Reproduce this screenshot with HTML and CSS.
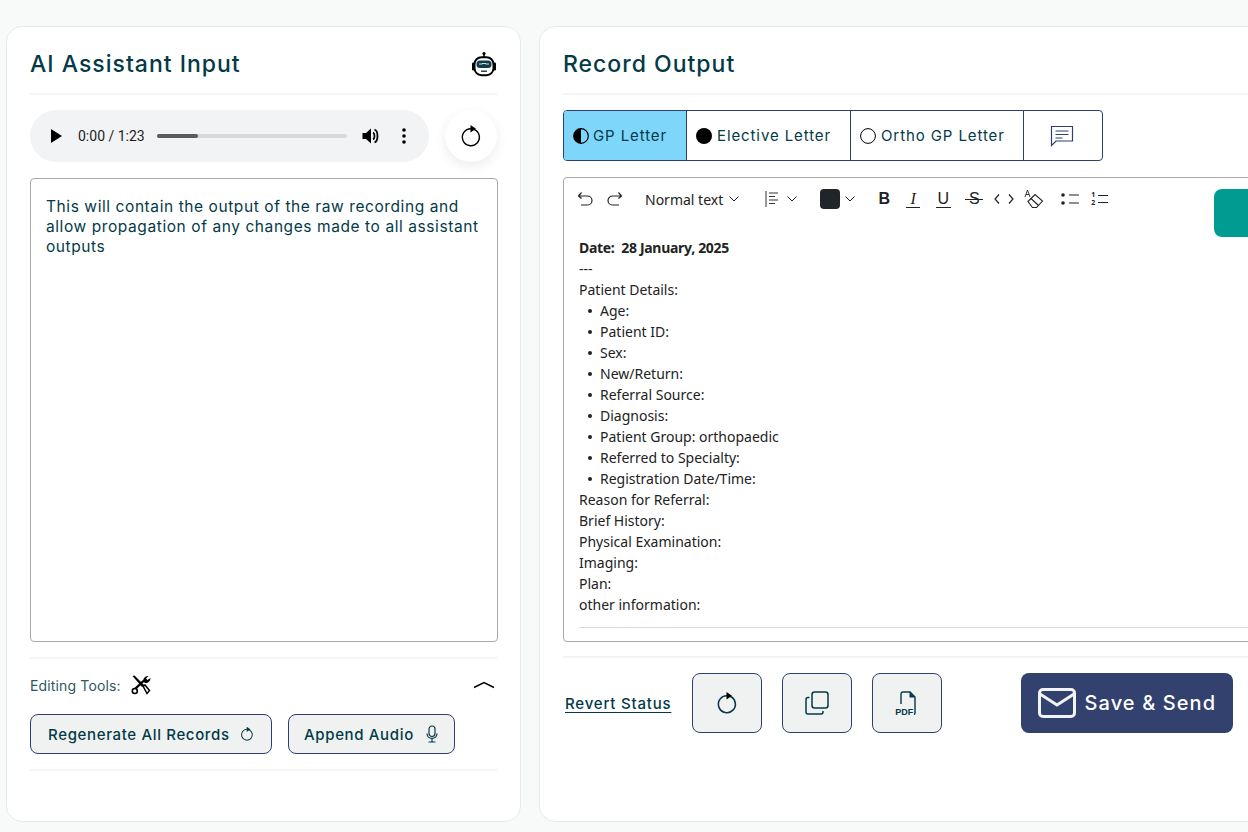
FILE: index.html
```html
<!DOCTYPE html>
<html lang="en">
<head>
    <meta charset="UTF-8">
    <meta name="viewport" content="width=device-width, initial-scale=1.0">
    <title>AI Assistant Record</title>
    <link rel="stylesheet" href="styles.css">
</head>
<body>
    <div class="page">
        <section class="card card-input">
            <div class="card-header">
                <h2>AI Assistant Input</h2>
                <svg class="robot-icon" width="26" height="26" viewBox="0 0 26 26">
                    <circle cx="13" cy="2.500" r="1.600" fill="#000"/>
                    <rect x="12.200" y="3" width="1.600" height="3.500" fill="#000"/>
                    <rect x="3.500" y="6.200" width="19" height="18" rx="7" fill="#fff" stroke="#000" stroke-width="2"/>
                    <rect x="1" y="11.500" width="2.600" height="8" rx="1.200" fill="#000"/>
                    <rect x="22.400" y="11.500" width="2.600" height="8" rx="1.200" fill="#000"/>
                    <rect x="5.500" y="9.500" width="15" height="7.500" rx="3.500" fill="#0f3a4a"/>
                    <path d="M8 13h3.500M14.500 13H18M11 12.500h4" stroke="#cfe3ea" stroke-width="1"/>
                    <rect x="10" y="19.500" width="6" height="1.400" fill="#0f3a4a"/>
                </svg>
            </div>
            <div class="audio-row">
                <div class="audio-player">
                    <svg class="play-icon" width="12" height="14" viewBox="0 0 12 14"><path d="M1 0l11 7-11 7z" fill="#000"/></svg>
                    <span class="audio-time">0:00 / 1:23</span>
                    <div class="audio-track"><div class="audio-fill"></div></div>
                    <svg class="volume-icon" width="18" height="18" viewBox="0 0 18 18">
                        <path d="M0.500 6h3.500l5-4.500v15l-5-4.500h-3.500z" fill="#000"/>
                        <path d="M11 5.500c2 1 2 6 0 7" fill="none" stroke="#000" stroke-width="1.800"/>
                        <path d="M12.500 2.500c4 1.500 4 11.500 0 13" fill="none" stroke="#000" stroke-width="1.800"/>
                    </svg>
                    <svg class="more-icon" width="4" height="16" viewBox="0 0 4 16">
                        <circle cx="2" cy="2" r="1.800"/><circle cx="2" cy="8" r="1.800"/><circle cx="2" cy="14" r="1.800"/>
                    </svg>
                </div>
                <button class="circle-button">
                    <svg width="22" height="24" viewBox="0 0 22 24">
                        <path d="M14 5.300A8.500 8.500 0 1 1 11 4.700" fill="none" stroke="#000" stroke-width="1.400"/>
                        <path d="M10.500 1l5.500 3.700-5.500 3.700z" fill="#000"/>
                    </svg>
                </button>
            </div>
            <div class="raw-text">This will contain the output of the raw recording and allow propagation of any changes made to all assistant outputs</div>
            <div class="tools-section">
                <div class="tools-row">
                    <span class="tools-label">Editing Tools:</span>
                    <svg class="tools-icon" width="20" height="20" viewBox="0 0 20 20">
                        <path d="M1.500 1l2-.5L13 10l-2 2z" fill="#000"/>
                        <path d="M12 11l2-1 4.500 5.500-2.500 3z" fill="#fff" stroke="#000" stroke-width="1.500"/>
                        <path d="M3.500 14.500L13 5.500" stroke="#000" stroke-width="2.400"/>
                        <path d="M12.500 6.500c-1-3 1.500-5.500 5-5.500l-2.500 2.500 1.500 1.500 3-2c0 3.500-3 5.500-5.500 5z" fill="#000"/>
                        <circle cx="3.800" cy="16" r="2.500" fill="#fff" stroke="#000" stroke-width="1.600"/>
                    </svg>
                    <svg class="caret-up" width="22" height="10" viewBox="0 0 22 10"><path d="M1 7.500L11 2.500l10 5" fill="none" stroke="#000" stroke-width="1.500"/></svg>
                </div>
                <div class="tools-buttons">
                    <button class="tool-button tool-regen">Regenerate All Records
                        <svg width="14" height="16" viewBox="0 0 22 24">
                            <path d="M14 5.300A8.500 8.500 0 1 1 11 4.700" fill="none" stroke="#033a47" stroke-width="1.600"/>
                            <path d="M10.500 0.500l6 4.200-6 4.200z" fill="#033a47"/>
                        </svg>
                    </button>
                    <button class="tool-button tool-append">Append Audio
                        <svg width="12" height="18" viewBox="0 0 12 18">
                            <rect x="3" y="1" width="6" height="10.500" rx="3" fill="none" stroke="#033a47" stroke-width="1.200"/>
                            <path d="M1 8.500c0 6.500 10 6.500 10 0M6 14v3M2.500 17h7" fill="none" stroke="#033a47" stroke-width="1.200"/>
                        </svg>
                    </button>
                </div>
            </div>
        </section>

        <section class="card card-output">
            <div class="card-header">
                <h2>Record Output</h2>
            </div>
            <div class="tabs">
                <div class="tab tab-active tab-gp">
                    <svg width="16" height="16" viewBox="0 0 16 16"><circle cx="8" cy="8" r="7.300" fill="none" stroke="#000" stroke-width="1.200"/><path d="M8 .7a7.300 7.300 0 0 0 0 14.600z" fill="#000"/></svg>
                    GP Letter
                </div>
                <div class="tab tab-elective">
                    <svg width="16" height="16" viewBox="0 0 16 16"><circle cx="8" cy="8" r="8" fill="#000"/></svg>
                    Elective Letter
                </div>
                <div class="tab tab-ortho">
                    <svg width="16" height="16" viewBox="0 0 16 16"><circle cx="8" cy="8" r="7.400" fill="none" stroke="#000" stroke-width="1"/></svg>
                    Ortho GP Letter
                </div>
                <div class="tab tab-comment">
                    <svg width="24" height="22" viewBox="0 0 24 22">
                        <path d="M1.500 1.500h21v14.500H6L1.500 20.500z" fill="none" stroke="#2f4070" stroke-width="1.200"/>
                        <path d="M5.500 6h13M5.500 9.500h13M5.500 13h7" stroke="#2f4070" stroke-width="1.200"/>
                    </svg>
                </div>
            </div>
            <div class="editor">
                <div class="toolbar">
                    <svg class="tb-undo" width="16" height="16" viewBox="0 0 16 16"><path d="M4.500 1.500L1.500 5l3 2.500M1.500 5h9a4 4 0 0 1 0 9H4" fill="none" stroke="#222" stroke-width="1.200"/></svg>
                    <svg class="tb-redo" width="16" height="16" viewBox="0 0 16 16"><path d="M11.500 1.500l3 3.500-3 2.500M14.500 5h-9a4 4 0 0 0 0 9H12" fill="none" stroke="#222" stroke-width="1.200"/></svg>
                    <span class="tb-style">Normal text</span>
                    <svg class="tb-caret" width="10" height="6" viewBox="0 0 10 6"><path d="M.5 .5L5 5 9.500 .5" fill="none" stroke="#222" stroke-width="1"/></svg>
                    <svg class="tb-align" width="14" height="16" viewBox="0 0 14 16"><path d="M1 0v16M4 2h9M4 5.500h6M4 9h9M4 12.500h6" fill="none" stroke="#333" stroke-width="1"/></svg>
                    <svg class="tb-caret" width="10" height="6" viewBox="0 0 10 6"><path d="M.5 .5L5 5 9.500 .5" fill="none" stroke="#222" stroke-width="1"/></svg>
                    <div class="tb-color"></div>
                    <svg class="tb-caret" width="10" height="6" viewBox="0 0 10 6"><path d="M.5 .5L5 5 9.500 .5" fill="none" stroke="#222" stroke-width="1"/></svg>
                    <span class="tb-letter tb-bold">B</span>
                    <span class="tb-letter tb-italic">I</span>
                    <span class="tb-letter tb-under">U</span>
                    <span class="tb-letter tb-strike">S</span>
                    <svg class="tb-code" width="20" height="10" viewBox="0 0 20 10"><path d="M5 .5L1 5l4 4.500M15 .5L19 5l-4 4.500" fill="none" stroke="#222" stroke-width="1.200"/></svg>
                    <svg class="tb-eraser" width="20" height="20" viewBox="0 0 20 20">
                        <path d="M1 8L3.500 1 6 8M2 5.500h3" fill="none" stroke="#222" stroke-width=".9"/>
                        <path d="M4 12.500L11 5.500l7.500 6.500-6 6.500H8.500z" fill="none" stroke="#222" stroke-width="1.100"/>
                        <path d="M7 9.500l7.500 7" stroke="#222" stroke-width="1.100"/>
                    </svg>
                    <svg class="tb-list" width="18" height="14" viewBox="0 0 18 14">
                        <circle cx="2" cy="3" r="1.800" fill="#222"/><circle cx="2" cy="11" r="1.800" fill="#222"/>
                        <path d="M8 3h10M8 11h10" stroke="#222" stroke-width="1.200"/>
                    </svg>
                    <div class="tb-ordered"><div class="tb-nums"><div>1</div><div>2</div></div><svg width="10" height="12" viewBox="0 0 10 12"><path d="M0 2.500h10M0 9.500h10" stroke="#222" stroke-width="1.200"/></svg></div>
                </div>
                <div class="teal-tab"></div>
                <div class="editor-body">
                    <p class="date-line">Date:&nbsp; 28 January, 2025</p>
                    <p>---</p>
                    <p>Patient Details:</p>
                    <ul>
                        <li>Age:</li>
                        <li>Patient ID:</li>
                        <li>Sex:</li>
                        <li>New/Return:</li>
                        <li>Referral Source:</li>
                        <li>Diagnosis:</li>
                        <li>Patient Group: orthopaedic</li>
                        <li>Referred to Specialty:</li>
                        <li>Registration Date/Time:</li>
                    </ul>
                    <p>Reason for Referral:</p>
                    <p>Brief History:</p>
                    <p>Physical Examination:</p>
                    <p>Imaging:</p>
                    <p>Plan:</p>
                    <p>other information:</p>
                </div>
            </div>
            <div class="footer-row">
                <a class="revert-link">Revert Status</a>
                <button class="icon-button">
                    <svg width="22" height="24" viewBox="0 0 22 24">
                        <path d="M14 5.300A8.500 8.500 0 1 1 11 4.700" fill="none" stroke="#033a47" stroke-width="1.600"/>
                        <path d="M10.500 1l5.500 3.700-5.500 3.700z" fill="#000"/>
                    </svg>
                </button>
                <button class="icon-button">
                    <svg width="24" height="24" viewBox="0 0 24 24">
                        <rect x="7" y="1" width="16" height="16" rx="2.500" fill="none" stroke="#033a47" stroke-width="1.500"/>
                        <path d="M4.500 6.500H3a2 2 0 0 0-2 2V21a2 2 0 0 0 2 2h13a2 2 0 0 0 2-2v-1" fill="none" stroke="#033a47" stroke-width="1.500"/>
                    </svg>
                </button>
                <button class="icon-button icon-pdf">
                    <svg width="18" height="24" viewBox="0 0 18 24">
                        <path d="M3 13V3a2 2 0 0 1 2-2h7l5 5v16a1.500 1.500 0 0 1-1.500 1.500H14" fill="none" stroke="#033a47" stroke-width="1.400"/>
                        <path d="M11.500 1v5.500H17z" fill="#033a47"/>
                    </svg>
                    <span class="pdf-label">PDF</span>
                </button>
                <button class="save-button">
                    <svg width="38" height="30" viewBox="0 0 38 30">
                        <rect x="1.500" y="1.500" width="35" height="27" rx="3.500" fill="none" stroke="#f1f3f4" stroke-width="3"/>
                        <path d="M2 6l17 11L36 6" fill="none" stroke="#f1f3f4" stroke-width="3"/>
                    </svg>
                    Save &amp; Send
                </button>
            </div>
        </section>
    </div>
</body>
</html>
```

FILE: styles.css
```css
* {
    box-sizing: border-box;
}
html, body {
    margin: 0;
    height: 100%;
    overflow: hidden;
}
body {
    background-color: #f8faf9;
    font-family: Inter, "Open Sans", sans-serif;
    color: #033a47;
}
.page {
    display: flex;
    gap: 18px;
    padding: 26px 0 10px 6px;
    height: 832px;
    width: 1400px;
}
.card {
    background: #fff;
    border: 1px solid #e6ebea;
    border-radius: 16px;
    padding: 0 23px;
}
.card-input {
    width: 515px;
    flex: none;
}
.card-output {
    width: 800px;
    flex: none;
}
.card-header {
    height: 68px;
    border-bottom: 2px solid #f3f4f4;
    display: flex;
    align-items: center;
    justify-content: space-between;
    padding-top: 8px;
}
.card-header h2 {
    margin: 0;
    font-size: 23px;
    font-weight: 500;
    letter-spacing: 1px;
}
.robot-icon {
    margin-bottom: 1px;
}
.audio-row {
    display: flex;
    gap: 16px;
    margin-top: 15px;
}
.audio-player {
    width: 399px;
    height: 52px;
    border-radius: 26px;
    background-color: #f1f3f4;
    display: flex;
    align-items: center;
    padding-left: 20px;
}
.audio-time {
    font-family: Roboto, sans-serif;
    font-size: 14px;
    color: #1e1e1e;
    margin-left: 16px;
}
.audio-track {
    width: 190px;
    height: 4px;
    border-radius: 2px;
    background-color: #d9d9d9;
    margin-left: 12px;
}
.audio-fill {
    width: 41px;
    height: 4px;
    border-radius: 2px;
    background-color: #5a5a5a;
}
.volume-icon {
    margin-left: 15px;
}
.more-icon {
    margin-left: 22px;
}
.circle-button {
    width: 52px;
    height: 52px;
    border: none;
    border-radius: 50%;
    background: #fff;
    box-shadow: 0 4px 12px rgba(0, 0, 0, 0.08);
    display: flex;
    align-items: center;
    justify-content: center;
    padding: 0;
}
.raw-text {
    margin-top: 16px;
    width: 468px;
    height: 464px;
    border: 1px solid #a9a9a9;
    border-radius: 4px;
    padding: 18px 15px;
    font-size: 15.500px;
    line-height: 20px;
    letter-spacing: 0.58px;
}
.tools-section {
    margin-top: 15px;
    border-top: 2px solid #f3f4f4;
    border-bottom: 2px solid #f3f4f4;
    height: 114px;
    width: 467px;
}
.tools-row {
    display: flex;
    align-items: center;
    height: 55px;
    padding-bottom: 3px;
}
.tools-label {
    font-size: 14px;
    letter-spacing: 0.15px;
    color: #2f5763;
}
.tools-icon {
    margin-left: 10px;
}
.caret-up {
    margin-left: auto;
    margin-right: 2px;
}
.tools-buttons {
    display: flex;
    gap: 16px;
}
.tool-button {
    height: 40px;
    border: 1px solid #2f4070;
    border-radius: 8px;
    background-color: #f0f2f2;
    color: #033a47;
    font-family: inherit;
    font-size: 15px;
    font-weight: 500;
    letter-spacing: 0.65px;
    display: flex;
    align-items: center;
    justify-content: space-between;
}
.tool-regen {
    width: 242px;
    padding: 0 17px;
}
.tool-append {
    width: 167px;
    padding: 0 16px 0 15px;
}
.tabs {
    display: flex;
    width: 540px;
    height: 51px;
    margin-top: 15px;
    border: 1px solid #2f4070;
    border-radius: 4px;
    overflow: hidden;
}
.tab {
    display: flex;
    align-items: center;
    gap: 5px;
    padding-left: 9px;
    font-size: 15px;
    letter-spacing: 0.9px;
    border-right: 1px solid #2f4070;
}
.tab-active {
    background-color: #7fd6fb;
}
.tab-gp {
    width: 123px;
    gap: 4px;
}
.tab-elective {
    width: 164px;
}
.tab-ortho {
    width: 173px;
}
.tab-comment {
    flex: 1;
    border-right: none;
    justify-content: center;
    padding-left: 0;
    padding-right: 2px;
}
.editor {
    position: relative;
    margin-top: 16px;
    height: 465px;
    border: 1px solid #a9a9a9;
    border-radius: 4px;
    padding: 0 15px;
}
.toolbar {
    display: flex;
    align-items: center;
    height: 42px;
    font-family: "Noto Sans", sans-serif;
    color: #222;
}
.tb-undo {
    margin-left: -2px;
}
.tb-redo {
    margin-left: 14px;
}
.tb-style {
    font-size: 14px;
    margin-left: 22px;
}
.tb-caret {
    margin-left: 6px;
}
.tb-align {
    margin-left: 26px;
}
.tb-align + .tb-caret {
    margin-left: 8px;
}
.tb-color {
    width: 20px;
    height: 20px;
    border-radius: 4px;
    background-color: #212529;
    margin-left: 23px;
}
.tb-color + .tb-caret {
    margin-left: 5px;
}
.tb-letter {
    width: 18px;
    line-height: 18px;
    text-align: center;
    font-size: 16px;
    font-family: "Liberation Sans", sans-serif;
}
.tb-bold {
    font-weight: 700;
    margin-left: 20px;
}
.tb-italic {
    font-family: "Liberation Serif", serif;
    font-style: italic;
    margin-left: 11px;
    background: linear-gradient(#222, #222) center bottom / 14px 1px no-repeat;
}
.tb-under {
    margin-left: 12px;
    background: linear-gradient(#222, #222) center bottom / 15px 1px no-repeat;
}
.tb-strike {
    margin-left: 13px;
    background: linear-gradient(#222, #222) center / 18px 1px no-repeat;
}
.tb-code {
    margin-left: 11px;
}
.tb-eraser {
    margin-left: 10px;
}
.tb-list {
    margin-left: 17px;
}
.tb-ordered {
    display: flex;
    align-items: center;
    gap: 3px;
    margin-left: 12px;
}
.tb-nums {
    font-size: 7px;
    line-height: 8px;
    font-weight: 700;
}
.teal-tab {
    position: absolute;
    top: 11px;
    left: 650px;
    width: 120px;
    height: 48px;
    border-radius: 8px;
    background-color: #009b91;
}
.editor-body {
    padding-top: 17px;
    height: 408px;
    border-bottom: 1px solid #ddd;
    font-family: "Noto Sans", sans-serif;
    font-size: 14px;
    line-height: 21px;
    color: #222;
}
.editor-body p {
    margin: 0;
}
.date-line {
    font-weight: 700;
    letter-spacing: -0.3px;
}
.editor-body ul {
    margin: 0;
    padding: 0;
    list-style: none;
}
.editor-body li {
    padding-left: 21px;
    position: relative;
}
.editor-body li::before {
    content: "";
    position: absolute;
    left: 9px;
    top: 9px;
    width: 4px;
    height: 4px;
    border-radius: 50%;
    background-color: #222;
}
.footer-row {
    margin-top: 14px;
    border-top: 2px solid #f3f4f4;
    padding-top: 15px;
    display: flex;
    align-items: center;
}
.revert-link {
    font-size: 15px;
    font-weight: 500;
    letter-spacing: 0.8px;
    margin-left: 2px;
    text-decoration: underline;
    text-underline-offset: 3px;
}
.icon-button {
    position: relative;
    width: 70px;
    height: 60px;
    border: 1px solid #2f4070;
    border-radius: 8px;
    background-color: #f0f2f2;
    display: flex;
    align-items: center;
    justify-content: center;
    padding: 0;
    margin-left: 20px;
}
.revert-link + .icon-button {
    margin-left: 21px;
}
.pdf-label {
    position: absolute;
    left: 21px;
    top: 33px;
    font-size: 9px;
    font-weight: 700;
    color: #033a47;
    background-color: #f0f2f2;
    padding: 0 1px;
}
.save-button {
    margin-left: 79px;
    width: 212px;
    height: 60px;
    border: none;
    border-radius: 8px;
    background-color: #33416e;
    color: #fff;
    font-family: inherit;
    font-size: 20px;
    font-weight: 500;
    letter-spacing: 1.1px;
    display: flex;
    align-items: center;
    justify-content: center;
    gap: 8px;
}
```
